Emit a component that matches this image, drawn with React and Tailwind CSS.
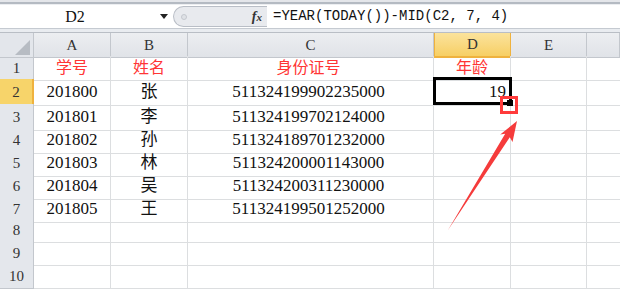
import React from "react";

const serif = { fontFamily: '"Liberation Serif", "Times New Roman", serif' };
const cjk = { fontFamily: '"Liberation Serif", "Noto Sans CJK SC", serif' };

const rows = [
  ["201800", "张", "511324199902235000", "19"],
  ["201801", "李", "511324199702124000", ""],
  ["201802", "孙", "511324189701232000", ""],
  ["201803", "林", "511324200001143000", ""],
  ["201804", "吴", "511324200311230000", ""],
  ["201805", "王", "511324199501252000", ""],
  ["", "", "", ""],
  ["", "", "", ""],
  ["", "", "", ""],
];

function FormulaBar() {
  return (
    <div className="flex flex-col">
      <div className="h-[2px] bg-[#e4e6ea]" />
      <div className="h-[2px] bg-[#b4bac2]" />
      <div className="h-[1px] bg-[#eceef1]" />
      <div className="flex h-[23px] items-center bg-white">
        <div className="relative flex h-full w-[173px] shrink-0 items-center">
          <span className="w-[150px] text-center text-[16px] leading-none text-[#111]" style={serif}>
            D2
          </span>
          <svg className="absolute left-[160px] top-[9px]" width="8" height="5" viewBox="0 0 8 5">
            <path d="M0 0h8L4 5z" fill="#222" />
          </svg>
        </div>
        <div className="flex h-[21px] w-[94px] shrink-0 items-center rounded-l-[11px] border border-r-0 border-[#b9bec6] bg-[#e8eaee]">
          <div className="ml-[7px] h-[6px] w-[6px] rounded-full border border-[#c4c8ce] bg-[#dfe2e6]" />
          <span className="ml-auto mr-[5px] text-[14px] italic font-bold text-[#333]" style={serif}>
            f<span className="text-[11px]">x</span>
          </span>
        </div>
        <div className="flex h-full flex-1 items-center pl-[6px]">
          <span className="whitespace-pre text-[14px] text-[#111]" style={{ fontFamily: '"Liberation Mono", monospace' }}>
            =YEAR(TODAY())-MID(C2, 7, 4)
          </span>
        </div>
      </div>
      <div className="h-[1px] bg-[#c5cad1]" />
      <div className="h-[3px] bg-[#e9ecf0]" />
    </div>
  );
}

function Header() {
  const letters = ["A", "B", "C", "D", "E", ""];
  return (
    <div className="grid h-[24px] grid-cols-[34px_77px_77px_246px_77px_76px_1fr] border-t border-[#b9bec5]">
      <div className="relative border-r border-b border-[#c3c7cd] bg-[#e3e6eb]">
        <svg className="absolute right-[3px] bottom-[2px]" width="15" height="15" viewBox="0 0 15 15">
          <path d="M15 0V15H0z" fill="#b7bcc3" />
        </svg>
      </div>
      {letters.map((l, i) =>
        l === "D" ? (
          <div key={i} className="flex items-center justify-center border-x border-b-2 border-[#efb23e] bg-gradient-to-b from-[#fbe39c] to-[#f7cf63] text-[15px] text-[#333]" style={serif}>
            {l}
          </div>
        ) : (
          <div key={i} className="flex items-center justify-center border-r border-b border-[#c3c7cd] bg-gradient-to-b from-[#eceef1] to-[#e0e3e8] text-[15px] text-[#333]" style={serif}>
            {l}
          </div>
        )
      )}
    </div>
  );
}

function Row({ n, cells, h, active, title }) {
  const txt = title ? "text-[16px] text-[#ff3535]" : "text-[17px] text-[#111]";
  return (
    <div className={`grid grid-cols-[34px_77px_77px_246px_77px_76px_1fr] ${h}`}>
      <div
        className={
          active
            ? "flex items-center justify-center border-r-2 border-b border-[#efb23e] bg-[#f7d46a] text-[15px] text-[#333]"
            : "flex items-center justify-center border-r border-b border-[#c3c7cd] bg-[#e4e7ec] text-[15px] text-[#333]"
        }
        style={serif}
      >
        {n}
      </div>
      <div className={`flex items-center justify-center border-r border-b border-[#dcdee0] ${txt}`} style={cjk}>{cells[0]}</div>
      <div className={`flex items-center justify-center border-r border-b border-[#dcdee0] ${txt}`} style={cjk}>{cells[1]}</div>
      <div className={`flex items-center justify-center border-r border-b border-[#dcdee0] pr-[4px] ${txt}`} style={cjk}>{cells[2]}</div>
      <div className={`flex items-center ${title ? "justify-center" : "justify-end pr-[4px]"} border-r border-b border-[#dcdee0] ${txt}`} style={cjk}>{cells[3]}</div>
      <div className="border-r border-b border-[#dcdee0]" />
      <div className="border-b border-[#dcdee0]" />
    </div>
  );
}

export default function App() {
  return (
    <div className="relative h-[289px] w-[620px] overflow-hidden bg-white">
      <FormulaBar />
      <Header />
      <Row n="1" cells={["学号", "姓名", "身份证号", "年龄"]} h="h-[23px]" title />
      {rows.map((r, i) => (
        <Row key={i} n={String(i + 2)} cells={r} h={i === 0 ? "h-[25px]" : "h-[23px]"} active={i === 0} />
      ))}

      <div className="absolute left-[433px] top-[77px] h-[28px] w-[79px] border-[3px] border-black" />
      <div className="absolute left-[507px] top-[100px] h-[6px] w-[6px] bg-black" />
      <div className="absolute left-[500px] top-[96px] h-[18px] w-[18px] border-[3px] border-[#ff3b3b]" />

      <svg className="absolute left-0 top-0" width="620" height="289" viewBox="0 0 620 289">
        <polygon
          points="517,121 512.5,142 509.8,137.2 448,230 505.2,133.7 500.2,134.5"
          fill="#f53b3b"
        />
      </svg>
    </div>
  );
}
